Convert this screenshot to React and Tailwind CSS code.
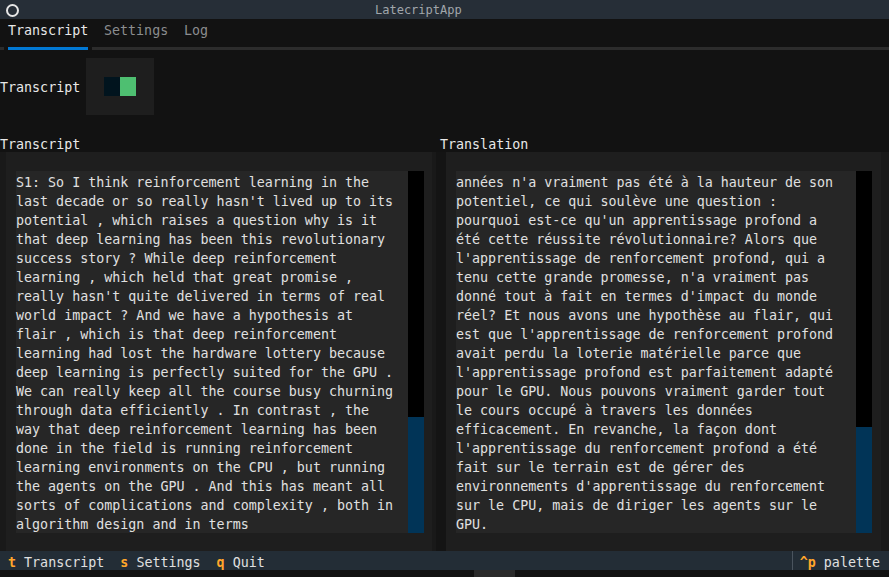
import React from "react";

const mono = { fontFamily: '"DejaVu Sans Mono", "Liberation Mono", monospace' };

const transcript = [
  "S1: So I think reinforcement learning in the",
  "last decade or so really hasn't lived up to its",
  "potential , which raises a question why is it",
  "that deep learning has been this revolutionary",
  "success story ? While deep reinforcement",
  "learning , which held that great promise ,",
  "really hasn't quite delivered in terms of real",
  "world impact ? And we have a hypothesis at",
  "flair , which is that deep reinforcement",
  "learning had lost the hardware lottery because",
  "deep learning is perfectly suited for the GPU .",
  "We can really keep all the course busy churning",
  "through data efficiently . In contrast , the",
  "way that deep reinforcement learning has been",
  "done in the field is running reinforcement",
  "learning environments on the CPU , but running",
  "the agents on the GPU . And this has meant all",
  "sorts of complications and complexity , both in",
  "algorithm design and in terms",
];

const translation = [
  "années n'a vraiment pas été à la hauteur de son",
  "potentiel, ce qui soulève une question :",
  "pourquoi est-ce qu'un apprentissage profond a",
  "été cette réussite révolutionnaire? Alors que",
  "l'apprentissage de renforcement profond, qui a",
  "tenu cette grande promesse, n'a vraiment pas",
  "donné tout à fait en termes d'impact du monde",
  "réel? Et nous avons une hypothèse au flair, qui",
  "est que l'apprentissage de renforcement profond",
  "avait perdu la loterie matérielle parce que",
  "l'apprentissage profond est parfaitement adapté",
  "pour le GPU. Nous pouvons vraiment garder tout",
  "le cours occupé à travers les données",
  "efficacement. En revanche, la façon dont",
  "l'apprentissage du renforcement profond a été",
  "fait sur le terrain est de gérer des",
  "environnements d'apprentissage du renforcement",
  "sur le CPU, mais de diriger les agents sur le",
  "GPU.",
];

// text area with its scrollbar, inside the padded panel
const Panel = ({ lines, thumb, className }) => (
  <div className={`flex h-full bg-[#1e1e1e] pt-[19px] pb-[18px] pl-[10px] ${className}`}>
    <div className="flex-1 bg-[#262626] text-[#e0e0e0]">
      {lines.map((l, i) => (
        <div key={i} className="h-[19px] leading-[23px] whitespace-pre">
          {l}
        </div>
      ))}
    </div>
    <div className="w-[16px] flex flex-col">
      <div className="flex-1 bg-black" />
      <div className="bg-[#013457]" style={{ height: thumb }} />
    </div>
  </div>
);

const Key = ({ k, label }) => (
  <span className="whitespace-pre">
    <span className="text-[#ffa62b] font-bold">{k}</span>
    <span className="text-[#e0e0e0]"> {label}</span>
  </span>
);

export default function App() {
  return (
    <div
      className="w-[889px] h-[577px] overflow-hidden bg-[#121212] text-[13.33px] flex flex-col"
      style={mono}
    >
      {/* header */}
      <div className="h-[19px] shrink-0 bg-[#262e37] flex items-center relative">
        <span className="absolute left-[6px] top-[4px] w-[13px] h-[13px] rounded-full border-[2.5px] border-[#e6e6e6]" />
        <span className="absolute left-[375px] top-0 leading-[21px] text-[12px] text-[#a1a6ab]">
          LatecriptApp
        </span>
      </div>

      {/* tabs */}
      <div className="h-[19px] shrink-0 flex leading-[23px] pl-[8px]">
        <span className="text-[#e8e8e8] w-[96px]">Transcript</span>
        <span className="text-[#8b8d8f] w-[80px]">Settings</span>
        <span className="text-[#8b8d8f]">Log</span>
      </div>
      <div className="h-[19px] shrink-0 pt-[9px]">
        <div className="flex h-[3px]">
          <div className="w-[4px] bg-[#2c2c2c]" />
          <div className="w-[4px]" />
          <div className="w-[80px] bg-[#0178d4]" />
          <div className="w-[4px]" />
          <div className="flex-1 bg-[#2c2c2c]" />
        </div>
      </div>

      {/* switch row */}
      <div className="h-[57px] shrink-0 flex items-center">
        <span className="w-[86px] h-[19px] text-[#e8e8e8] leading-[23px]">Transcript</span>
        <div className="w-[68px] h-[57px] bg-[#1e1e1e] flex items-center justify-center mt-[2px]">
          <div className="flex h-[19px]">
            <div className="w-[16px] bg-[#01141e]" />
            <div className="w-[16px] bg-[#4ebf71]" />
          </div>
        </div>
      </div>

      <div className="h-[19px] shrink-0" />

      {/* labels */}
      <div className="h-[19px] shrink-0 flex leading-[23px] text-[#e8e8e8]">
        <span className="w-[440px]">Transcript</span>
        <span>Translation</span>
      </div>

      {/* panels */}
      <div className="h-[399px] shrink-0 flex">
        <div className="w-[436px] bg-[#191919] pl-[6px] pr-[4px]">
          <Panel lines={transcript} thumb={116} className="pr-[8px]" />
        </div>
        <div className="w-[10px] bg-[#141414]" />
        <div className="flex-1 bg-[#191919] pr-[8px]">
          <Panel lines={translation} thumb={106} className="pr-[9px]" />
        </div>
      </div>

      {/* footer */}
      <div className="h-[19px] shrink-0 bg-[#232d36] flex leading-[23px]">
        <div className="pl-[8px] flex gap-[16px]">
          <Key k="t" label="Transcript" />
          <Key k="s" label="Settings" />
          <Key k="q" label="Quit" />
        </div>
        <div className="flex-1" />
        <div className="w-[1px] h-[19px] bg-[#4a545e]" />
        <div className="pl-[7px] pr-[9px]">
          <Key k="^p" label="palette" />
        </div>
      </div>

      <div className="flex-1 relative">
        <div className="absolute left-[474px] top-0 w-[41px] h-[7px] bg-[#2a2a2a]" />
      </div>
    </div>
  );
}
